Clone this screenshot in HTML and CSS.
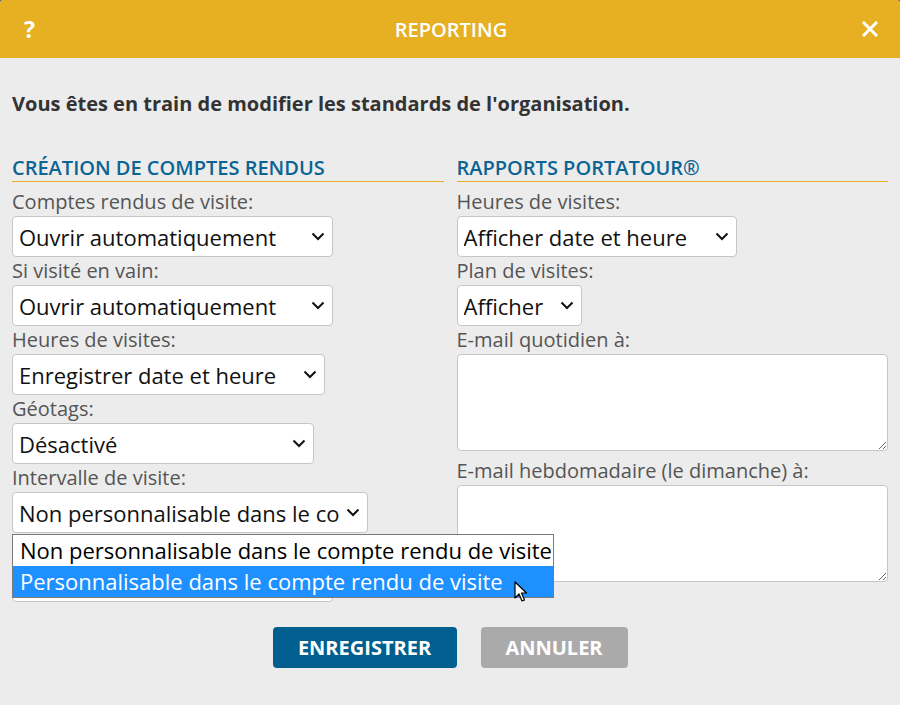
FILE: index.html
```html
<!DOCTYPE html>
<html lang="fr">
<head>
  <meta charset="UTF-8">
  <title>Reporting</title>
  <link rel="stylesheet" href="styles.css">
</head>
<body>

<div class="dialog">
  <!-- Title bar -->
  <div class="titlebar">
    <span class="help">?</span>
    <span class="title">REPORTING</span>
    <span class="close">
      <svg width="16" height="16" viewBox="0 0 16 16">
        <path d="M2 2 L14 14 M14 2 L2 14" stroke="#fff" stroke-width="3" stroke-linecap="square"/>
      </svg>
    </span>
  </div>

  <div class="content">
    <p class="intro">Vous êtes en train de modifier les standards de l'organisation.</p>

    <div class="columns">
      <div class="column">
        <h3>Création de comptes rendus</h3>

        <label>Comptes rendus de visite:</label>
        <select class="sel-l">
          <option>Ouvrir automatiquement</option>
        </select>

        <label>Si visité en vain:</label>
        <select class="sel-l">
          <option>Ouvrir automatiquement</option>
        </select>

        <label>Heures de visites:</label>
        <select class="sel-m">
          <option>Enregistrer date et heure</option>
        </select>

        <label>Géotags:</label>
        <select class="sel-s">
          <option>Désactivé</option>
        </select>

        <label>Intervalle de visite:</label>
        <div class="field-open">
          <select class="sel-xl">
            <option>Non personnalisable dans le compte rendu de visite</option>
          </select>
          <div class="listbox">
            <div class="option">Non personnalisable dans le compte rendu de visite</div>
            <div class="option selected">Personnalisable dans le compte rendu de visite</div>
            <svg class="cursor" width="14" height="22" viewBox="0 0 14 22">
              <path d="M1 1 L1 17 L5 13 L8 20 L10.5 19 L7.5 12 L12.5 12 Z" fill="#fff" stroke="#000" stroke-width="1.2" stroke-linejoin="round"/>
            </svg>
          </div>
        </div>

        <!-- field hidden behind the open list -->
        <label class="spacer"></label>
        <select class="sel-l">
          <option></option>
        </select>
      </div>

      <div class="column">
        <h3>Rapports Portatour®</h3>

        <label>Heures de visites:</label>
        <select class="sel-r">
          <option>Afficher date et heure</option>
        </select>

        <label>Plan de visites:</label>
        <select class="sel-xs">
          <option>Afficher</option>
        </select>

        <label>E-mail quotidien à:</label>
        <textarea></textarea>

        <label>E-mail hebdomadaire (le dimanche) à:</label>
        <textarea></textarea>
      </div>
    </div>

    <div class="actions">
      <button class="btn btn-save">ENREGISTRER</button>
      <button class="btn btn-cancel">ANNULER</button>
    </div>
  </div>
</div>

</body>
</html>
```

FILE: styles.css
```css
* {
  margin: 0;
  padding: 0;
  box-sizing: border-box;
}
body {
  font-family: "Open Sans", Arial, sans-serif;
  background-color: #666;
  width: 900px;
  height: 705px;
  overflow: hidden;
}
.dialog {
  background-color: #ececec;
  border-radius: 4px 4px 0 0;
  height: 705px;
  overflow: hidden;
}
.titlebar {
  height: 58px;
  background-color: #e6b022;
  color: white;
  display: flex;
  align-items: center;
  justify-content: space-between;
  padding: 0 22px 0 24px;
}
.help {
  font-size: 23px;
  font-weight: bold;
  width: 20px;
}
.title {
  font-size: 20px;
  font-weight: 600;
}
.close {
  width: 20px;
  display: flex;
  justify-content: flex-end;
}
.content {
  padding: 34px 12px 0 12px;
}
.intro {
  font-size: 20px;
  font-weight: bold;
  color: #333;
  line-height: 24px;
}
.columns {
  display: flex;
  gap: 13px;
  margin-top: 39px;
}
.column {
  flex: 1;
  display: flex;
  flex-direction: column;
  align-items: flex-start;
}
h3 {
  align-self: stretch;
  font-size: 20px;
  font-weight: 600;
  color: #0b6494;
  text-transform: uppercase;
  line-height: 26px;
  border-bottom: 1px solid #e6b022;
  margin-bottom: 6px;
}
label {
  font-size: 20px;
  color: #555;
  line-height: 28px;
}
.spacer {
  height: 28px;
}
select {
  appearance: none;
  font-family: "Open Sans", Arial, sans-serif;
  font-size: 22px;
  color: #111;
  height: 41px;
  background-color: white;
  background-image: url("data:image/svg+xml,%3Csvg xmlns='http://www.w3.org/2000/svg' width='14' height='9' viewBox='0 0 14 9'%3E%3Cpath d='M1.5 1.5 L7 7 L12.5 1.5' fill='none' stroke='%23111' stroke-width='2'/%3E%3C/svg%3E");
  background-repeat: no-repeat;
  background-position: right 7px center;
  border: 1px solid #c6c6c6;
  border-radius: 4px;
  padding: 0 28px 0 6px;
}
.sel-l { width: 321px; }
.sel-m { width: 313px; }
.sel-s { width: 302px; }
.sel-xl { width: 356px; }
.sel-r { width: 280px; }
.sel-xs { width: 125px; }
textarea {
  align-self: stretch;
  height: 97px;
  background-color: white;
  border: 1px solid #c6c6c6;
  border-radius: 4px;
  margin-bottom: 6px;
  resize: vertical;
}
.field-open {
  position: relative;
}
.listbox {
  position: absolute;
  top: 42px;
  left: 0;
  width: 542px;
  background-color: white;
  border: 1px solid #7a7a7a;
  z-index: 5;
}
.option {
  font-size: 22px;
  line-height: 31px;
  padding-left: 7px;
  color: #000;
  white-space: nowrap;
}
.option.selected {
  background-color: #1e90ff;
  color: white;
}
.cursor {
  position: absolute;
  left: 501px;
  top: 46px;
}
.actions {
  display: flex;
  justify-content: center;
  gap: 24px;
  margin-top: 25px;
}
.btn {
  font-family: "Open Sans", Arial, sans-serif;
  font-size: 20px;
  font-weight: bold;
  color: white;
  height: 41px;
  border: none;
  border-radius: 4px;
}
.btn-save {
  width: 184px;
  background-color: #005f8e;
}
.btn-cancel {
  width: 147px;
  background-color: #aaaaaa;
}
```
